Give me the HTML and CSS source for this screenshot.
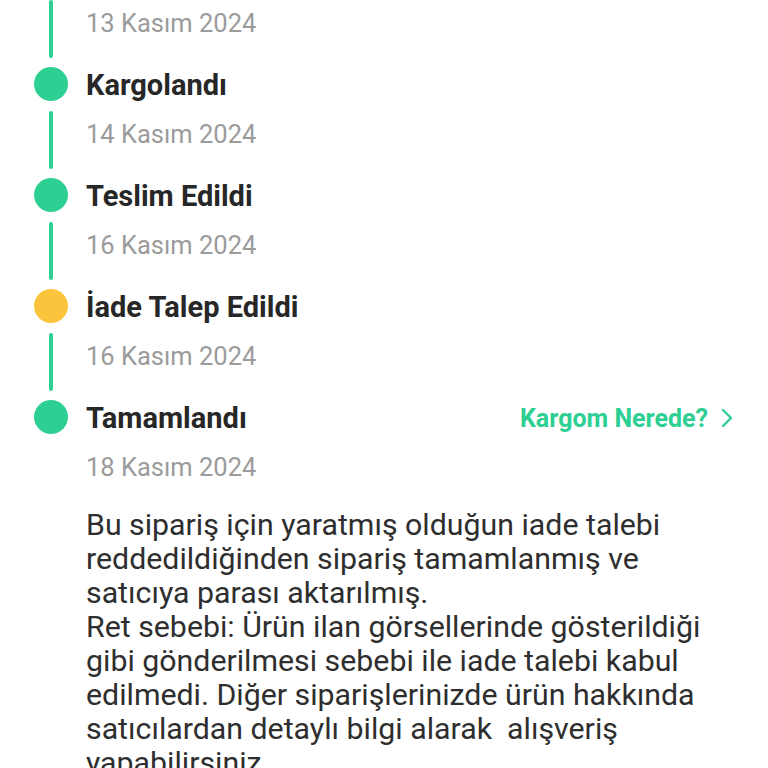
FILE: index.html
```html
<!DOCTYPE html>
<html lang="tr">
<head>
<meta charset="utf-8">
<link rel="stylesheet" href="styles.css">
</head>
<body>
<div class="timeline">
  <div class="conn first">
    <div class="rail"><span class="line"></span></div>
    <div class="date">13 Kasım 2024</div>
  </div>

  <div class="head">
    <span class="dot"></span>
    <div class="title">Kargolandı</div>
  </div>
  <div class="conn">
    <div class="rail"><span class="line"></span></div>
    <div class="date">14 Kasım 2024</div>
  </div>

  <div class="head">
    <span class="dot"></span>
    <div class="title">Teslim Edildi</div>
  </div>
  <div class="conn">
    <div class="rail"><span class="line"></span></div>
    <div class="date">16 Kasım 2024</div>
  </div>

  <div class="head">
    <span class="dot warn"></span>
    <div class="title">İade Talep Edildi</div>
  </div>
  <div class="conn">
    <div class="rail"><span class="line"></span></div>
    <div class="date">16 Kasım 2024</div>
  </div>

  <div class="head">
    <span class="dot"></span>
    <div class="title">Tamamlandı</div>
    <a class="track">Kargom Nerede?<svg class="chev" viewBox="0 0 12 20" width="12" height="20"><path d="M2 2 L10 10 L2 18" fill="none" stroke="currentColor" stroke-width="2.4" stroke-linecap="round" stroke-linejoin="round"/></svg></a>
  </div>
  <div class="conn last">
    <div class="rail"></div>
    <div class="date">18 Kasım 2024</div>
  </div>

  <p class="note">Bu sipariş için yaratmış olduğun iade talebi<br>reddedildiğinden sipariş tamamlanmış ve<br>satıcıya parası aktarılmış.<br>Ret sebebi: Ürün ilan görsellerinde gösterildiği<br>gibi gönderilmesi sebebi ile iade talebi kabul<br>edilmedi. Diğer siparişlerinizde ürün hakkında<br>satıcılardan detaylı bilgi alarak &nbsp;alışveriş<br>yapabilirsiniz.</p>
</div>
</body>
</html>
```

FILE: styles.css
```css
html, body {
  margin: 0;
  padding: 0;
  background: #ffffff;
}

body {
  font-family: Roboto, "Noto Sans", "Liberation Sans", sans-serif;
  overflow: hidden;
  height: 768px;
}

.timeline {
  margin-top: -10px;
  padding: 0 35px 0 34px;
}

.head {
  display: flex;
  align-items: center;
  height: 34px;
}

.dot {
  flex: 0 0 34px;
  width: 34px;
  height: 34px;
  border-radius: 50%;
  background: #2ecf93;
}

.dot.warn {
  background: #fbc43c;
}

.title {
  margin-left: 18px;
  font-size: 29px;
  font-weight: 700;
  color: #272727;
  line-height: 34px;
  padding-top: 2px;
  flex: 1;
}

.track {
  display: flex;
  align-items: center;
  gap: 13px;
  font-size: 25px;
  font-weight: 700;
  color: #2ecf93;
  padding-top: 2px;
}

.chev {
  display: block;
}

.conn {
  display: flex;
  height: 77px;
}

.rail {
  flex: 0 0 34px;
  display: flex;
  justify-content: center;
}

.line {
  display: block;
  width: 4px;
  height: 58px;
  margin-top: 10px;
  background: #2ecf93;
  border-radius: 2px;
}

.date {
  margin-left: 18px;
  margin-top: 18px;
  font-size: 25.5px;
  line-height: 30px;
  color: #9b9b9b;
}

.conn.last {
  height: 63px;
}

.note {
  margin: 11px 0 0 52px;
  font-size: 30.3px;
  line-height: 34px;
  color: #2e2e2e;
  white-space: nowrap;
}
```
